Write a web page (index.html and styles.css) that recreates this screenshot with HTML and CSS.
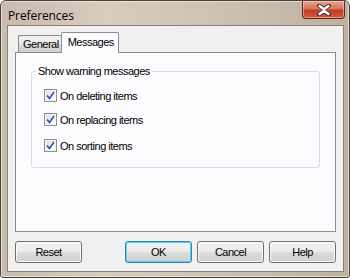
FILE: index.html
```html
<!DOCTYPE html>
<html>
<head>
<meta charset="utf-8">
<link rel="stylesheet" href="styles.css">
</head>
<body>
<div class="window">
  <div class="titlebar">
    <span class="title">Preferences</span>
    <div class="close">
      <svg width="16" height="12" viewBox="0 0 16 12">
        <path d="M3 1.5 L8 5 L13 1.5 M3 10.5 L8 7 L13 10.5" fill="none" stroke="#4a3030" stroke-width="4" stroke-linecap="round"/>
        <path d="M3.5 2 L8 5.2 L12.5 2 M3.5 10 L8 6.8 L12.5 10" fill="none" stroke="#fff" stroke-width="2.4" stroke-linecap="round"/>
      </svg>
    </div>
  </div>
  <div class="client">
    <div class="tabs">
      <div class="tab">General</div>
      <div class="tab active">Messages</div>
    </div>
    <div class="panel">
      <div class="group">
        <div class="legend">Show warning messages</div>
        <label class="check r1"><span class="box"><svg width="9" height="9" viewBox="0 0 9 9"><path d="M1 4.5 L3.5 7.5 L8 1" fill="none" stroke="#2b4fb8" stroke-width="1.6"/></svg></span>On deleting items</label>
        <label class="check r2"><span class="box"><svg width="9" height="9" viewBox="0 0 9 9"><path d="M1 4.5 L3.5 7.5 L8 1" fill="none" stroke="#2b4fb8" stroke-width="1.6"/></svg></span>On replacing items</label>
        <label class="check r3"><span class="box"><svg width="9" height="9" viewBox="0 0 9 9"><path d="M1 4.5 L3.5 7.5 L8 1" fill="none" stroke="#2b4fb8" stroke-width="1.6"/></svg></span>On sorting items</label>
      </div>
    </div>
    <div class="buttons">
      <div class="btn">Reset</div>
      <div class="btn default push">OK</div>
      <div class="btn">Cancel</div>
      <div class="btn">Help</div>
    </div>
  </div>
</div>
</body>
</html>
```
FILE: styles.css
```css
html, body {
  margin: 0;
  padding: 0;
  width: 350px;
  height: 278px;
  overflow: hidden;
  background: #fff;
}
.window {
  box-sizing: border-box;
  width: 350px;
  height: 278px;
  border: 1px solid #4b4038;
  border-radius: 6px 6px 3px 3px;
  background: linear-gradient(90deg, #c9bcaf 0%, #d8ccbf 30%, #cfc2b5 60%, #bfb0a0 100%);
  display: flex;
  flex-direction: column;
  padding: 0 5px 5px 6px;
  box-shadow: inset 0 0 0 1px rgba(255,255,255,0.5);
}
.titlebar {
  height: 26px;
  display: flex;
  justify-content: space-between;
  align-items: flex-start;
}
.title {
  font-family: "Open Sans", "Noto Sans", sans-serif;
  font-size: 12px;
  color: #000;
  margin-top: 6px;
  margin-left: 1px;
  letter-spacing: -0.1px;
}
.close {
  width: 43px;
  height: 18px;
  margin-right: -1px;
  box-sizing: border-box;
  border: 1px solid #5a2a22;
  border-top: none;
  border-radius: 0 0 4px 4px;
  background: linear-gradient(180deg, #e8a593 0%, #d8745c 45%, #c23d22 55%, #cf5a3c 100%);
  display: flex;
  align-items: center;
  justify-content: center;
  box-shadow: inset 0 0 0 1px rgba(255,220,200,0.5);
}
.client {
  flex: 1;
  background: #f0f0f0;
  border: 1px solid #8a7f74;
  padding: 6px 7px 8px 7px;
  display: flex;
  flex-direction: column;
  font-family: "Liberation Sans", Arial, sans-serif;
  font-size: 11px;
  letter-spacing: -0.5px;
  color: #000;
}
.tabs {
  display: flex;
  align-items: flex-end;
  height: 20px;
  padding-left: 3px;
  position: relative;
  z-index: 1;
}
.tab {
  box-sizing: border-box;
  height: 17px;
  padding: 2px 2px 0 4px;
  border: 1px solid #898c95;
  border-bottom: none;
  border-right: none;
  background: linear-gradient(180deg, #f2f2f2 0%, #ebebeb 50%, #dddddd 51%, #cfcfcf 100%);
  border-radius: 2px 2px 0 0;
}
.tab.active {
  height: 21px;
  margin-bottom: -1px;
  padding: 3px 4px 0 6px;
  border-right: 1px solid #898c95;
  background: #fcfcfe;
}
.panel {
  box-sizing: border-box;
  height: 180px;
  border: 1px solid #898c95;
  background: #fcfcfe;
  padding: 18px 15px 0 15px;
}
.group {
  box-sizing: border-box;
  height: 97px;
  border: 1px solid #d5dfe5;
  border-radius: 3px;
  position: relative;
  padding: 0 0 0 12px;
}
.legend {
  position: absolute;
  top: -7px;
  left: 4px;
  padding: 0 2px;
  background: #fcfcfe;
}
.check {
  display: flex;
  align-items: center;
  height: 13px;
}
.r1 { margin-top: 17px; }
.r2 { margin-top: 11px; }
.r3 { margin-top: 13px; }
.box {
  box-sizing: border-box;
  width: 13px;
  height: 13px;
  border: 1px solid #8e8f8f;
  background: linear-gradient(135deg, #dcdcdc 0%, #f4f4f4 60%, #fff 100%);
  box-shadow: inset 0 0 0 1px #f4f4f4;
  margin-right: 3px;
  display: flex;
  align-items: center;
  justify-content: center;
}
.buttons {
  display: flex;
  margin-top: 9px;
  gap: 5px;
}
.push {
  margin-left: auto;
}
.btn {
  box-sizing: border-box;
  width: 67px;
  height: 22px;
  border: 1px solid #707070;
  border-radius: 3px;
  background: linear-gradient(180deg, #f2f2f2 0%, #ebebeb 50%, #dddddd 51%, #cfcfcf 100%);
  box-shadow: inset 0 0 0 1px #fcfcfc;
  display: flex;
  align-items: center;
  justify-content: center;
}
.btn.default {
  border-color: #3c7fb1;
  box-shadow: inset 0 0 0 1px #48d8f8;
}
```
